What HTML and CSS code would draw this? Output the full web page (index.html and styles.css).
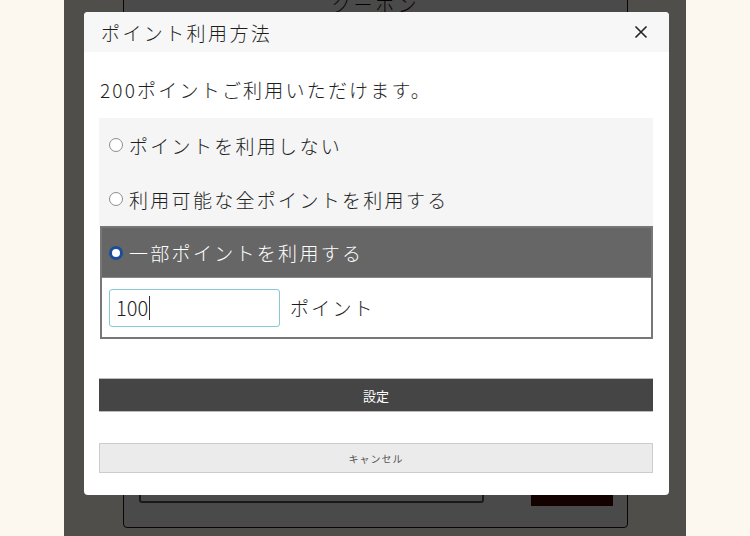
FILE: index.html
```html
<!DOCTYPE html>
<html lang="ja">
<head>
<meta charset="UTF-8">
<meta name="viewport" content="width=device-width, initial-scale=1.0">
<title>ポイント利用方法</title>
<link rel="stylesheet" href="styles.css">
</head>
<body>

<div class="app">
    <!-- coupon page behind the modal -->
    <div class="page">
        <div class="coupon-box">
            <div class="coupon-title">クーポン</div>
            <div class="coupon-row">
                <div class="coupon-input"></div>
                <div class="coupon-btn"></div>
            </div>
        </div>
    </div>

    <div class="overlay">
        <div class="modal">
            <div class="modal-header">
                <h2>ポイント利用方法</h2>
                <svg class="close" width="14" height="14" viewBox="0 0 14 14">
                    <path d="M1.5 1.5 L12.5 12.5 M12.5 1.5 L1.5 12.5" stroke="#222" stroke-width="1.6" fill="none"/>
                </svg>
            </div>
            <div class="modal-body">
                <p class="lead">200ポイントご利用いただけます。</p>

                <div class="options">
                    <div class="option"><span class="radio"></span>ポイントを利用しない</div>
                    <div class="option"><span class="radio"></span>利用可能な全ポイントを利用する</div>
                </div>

                <div class="option-selected">
                    <div class="option option-head"><span class="radio checked"></span>一部ポイントを利用する</div>
                    <div class="point-row">
                        <div class="point-input">100<span class="caret"></span></div>
                        <span class="point-unit">ポイント</span>
                    </div>
                </div>

                <button class="btn-submit">設定</button>
                <button class="btn-cancel">キャンセル</button>
            </div>
        </div>
    </div>
</div>

</body>
</html>
```

FILE: styles.css
```css
body {
    margin: 0;
    background-color: #fcf8ef;
    font-family: "Noto Sans CJK JP", "Noto Sans", sans-serif;
    font-weight: 300;
    color: #1e1e1e;
    height: 536px;
    overflow: hidden;
}
.app {
    position: relative;
    width: 622px;
    height: 536px;
    margin: 0 auto;
    background-color: #fdfaf0;
    overflow: hidden;
}

/* page behind */
.page {
    padding: 0 58px 0 59px;
}
.coupon-box {
    margin-top: -14px;
    height: 542px;
    border: 1px solid #2a1008;
    border-radius: 4px;
    background-color: #efefef;
    display: flex;
    flex-direction: column;
    justify-content: space-between;
    box-sizing: border-box;
}
.coupon-title {
    text-align: center;
    font-size: 19px;
    letter-spacing: 3px;
    line-height: 26px;
    padding-top: 4px;
    color: #1a0a05;
}
.coupon-row {
    display: flex;
    justify-content: space-between;
    align-items: flex-end;
    padding: 0 14px 21px 15px;
}
.coupon-input {
    width: 345px;
    height: 40px;
    margin-bottom: 3px;
    border: 2px solid #555;
    border-radius: 3px;
    box-sizing: border-box;
}
.coupon-btn {
    width: 82px;
    height: 40px;
    background-color: #3d0500;
}

/* modal */
.overlay {
    position: absolute;
    top: 0;
    left: 0;
    right: 0;
    bottom: 0;
    background-color: rgba(0,0,0,0.69);
}
.modal {
    position: absolute;
    top: 12px;
    left: 20px;
    width: 585px;
    height: 483px;
    background-color: #fff;
    border-radius: 4px;
    overflow: hidden;
}
.modal-header {
    height: 40px;
    background-color: #f7f7f7;
    display: flex;
    align-items: center;
    justify-content: space-between;
    padding: 0 21px 0 17px;
}
.modal-header h2 {
    margin: 0;
    font-size: 19px;
    font-weight: 300;
    letter-spacing: 2.4px;
    color: #1e1e1e;
}
.modal-body {
    padding: 0 16px 0 15px;
}
.lead {
    margin: 24px 0 14px 1px;
    font-size: 19px;
    line-height: 28px;
    letter-spacing: 2.2px;
}
.options {
    background-color: #f5f5f5;
}
.option {
    height: 54px;
    display: flex;
    align-items: center;
    padding-left: 10px;
    font-size: 19px;
    letter-spacing: 2.3px;
}
.radio {
    width: 14px;
    height: 14px;
    border: 1.5px solid #8d8d8d;
    border-radius: 50%;
    background-color: #fff;
    box-sizing: border-box;
    margin-right: 6px;
    flex-shrink: 0;
}
.radio.checked {
    border: 3.5px solid #1c4d9c;
}
.option-selected {
    border: 2px solid #777;
    margin-left: 1px;
}
.option-head {
    height: 49px;
    background-color: #666;
    color: #fff;
    padding-left: 7px;
    border-bottom: 1px solid #888;
}
.point-row {
    height: 59px;
    display: flex;
    align-items: center;
    padding-left: 7px;
}
.point-input {
    width: 171px;
    height: 38px;
    border: 1px solid #86c9d6;
    border-radius: 3px;
    box-sizing: border-box;
    padding-left: 6px;
    font-size: 20px;
    line-height: 36px;
    display: flex;
    align-items: center;
}
.caret {
    width: 1px;
    height: 24px;
    background-color: #333;
    margin-left: 1px;
}
.point-unit {
    margin-left: 10px;
    font-size: 19px;
    letter-spacing: 2.2px;
}
button {
    display: block;
    width: 100%;
    font-family: "Noto Sans CJK JP", sans-serif;
    cursor: pointer;
    box-sizing: border-box;
}
.btn-submit {
    margin-top: 39px;
    height: 34px;
    background-color: #454545;
    border: 1px solid #bbb;
    border-left: none;
    border-right: none;
    color: #fff;
    font-size: 13px;
}
.btn-cancel {
    margin-top: 31px;
    height: 30px;
    background-color: #ebebeb;
    border: 1px solid #ccc;
    color: #555;
    font-size: 10px;
    letter-spacing: 1px;
}
```
